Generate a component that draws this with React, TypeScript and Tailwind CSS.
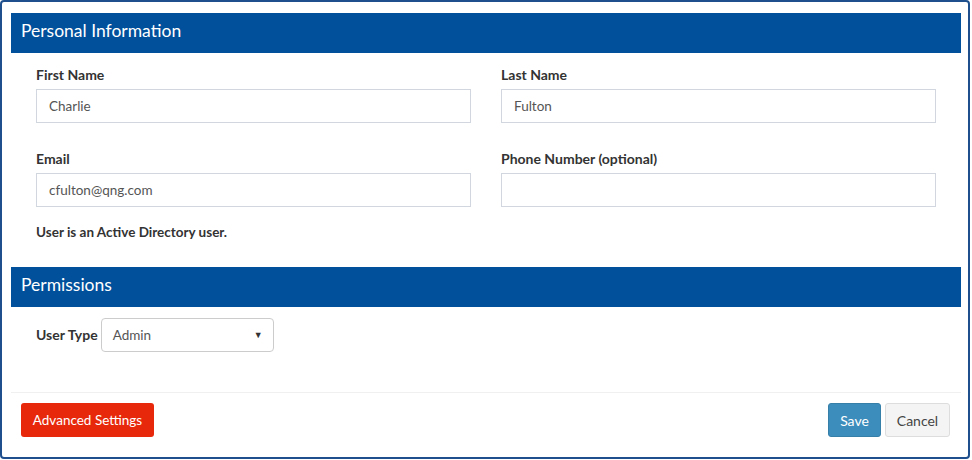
const Field = ({ label, value }: { label: string; value?: string }) => (
  <div className="flex flex-col">
    <label className="text-[14px] font-bold text-[#333] leading-[16px]">{label}</label>
    <div className="mt-[6px] h-[34px] border border-[#d2d6de] bg-white flex items-center px-[12px] text-[13.5px] text-[#555]">
      {value}
    </div>
  </div>
);

const SectionHeader = ({ title }: { title: string }) => (
  <div className="h-[40px] bg-[#00509c] text-white text-[17.5px] flex items-center pl-[10px] pb-[3px]">{title}</div>
);

export default function App() {
  return (
    <div className="w-[972px] h-[460px] bg-white" style={{ fontFamily: 'Lato, "Open Sans", sans-serif' }}>
      <div className="w-[970px] h-[459px] border-2 border-[#1f4f8c] rounded-[4px] pt-[11px] pl-[9px] flex flex-col">
        <div className="w-[950px] flex flex-col flex-1">
          {/* Personal Information */}
          <SectionHeader title="Personal Information" />
          <div className="px-[25px] pt-[14px]">
            <div className="grid grid-cols-2 gap-x-[30px] gap-y-[28px]">
              <Field label="First Name" value="Charlie" />
              <Field label="Last Name" value="Fulton" />
              <Field label="Email" value="cfulton@qng.com" />
              <Field label="Phone Number (optional)" />
            </div>
            <p className="mt-[16px] text-[13.5px] font-bold text-[#333] leading-[18px]">User is an Active Directory user.</p>
          </div>

          {/* Permissions */}
          <div className="mt-[26px]">
            <SectionHeader title="Permissions" />
          </div>
          <div className="px-[25px] pt-[11px] flex items-center gap-[3px]">
            <span className="text-[14px] font-bold text-[#333] pb-[2px]">User Type</span>
            <div className="w-[173px] h-[34px] border border-[#ccc] rounded-[4px] flex items-center justify-between pl-[11px] pr-[10px] text-[13.5px] text-[#555]">
              <span>Admin</span>
              <span className="text-[9px] text-[#333]">&#9660;</span>
            </div>
          </div>

          {/* Footer */}
          <div className="mt-auto mb-[20px] border-t border-[#f0f0f0] pt-[10px] px-[10px] flex justify-between items-center">
            <button className="h-[34px] w-[133px] rounded-[3px] bg-[#e8280b] text-white text-[13.5px]">Advanced Settings</button>
            <div className="flex gap-[4px] pr-[1px]">
              <button className="h-[34px] w-[53px] rounded-[3px] bg-[#3c8dbc] border border-[#367fa9] text-white text-[14px]">Save</button>
              <button className="h-[34px] w-[65px] rounded-[3px] bg-[#f4f4f4] border border-[#ddd] text-[#444] text-[14px]">Cancel</button>
            </div>
          </div>
        </div>
      </div>
    </div>
  );
}
